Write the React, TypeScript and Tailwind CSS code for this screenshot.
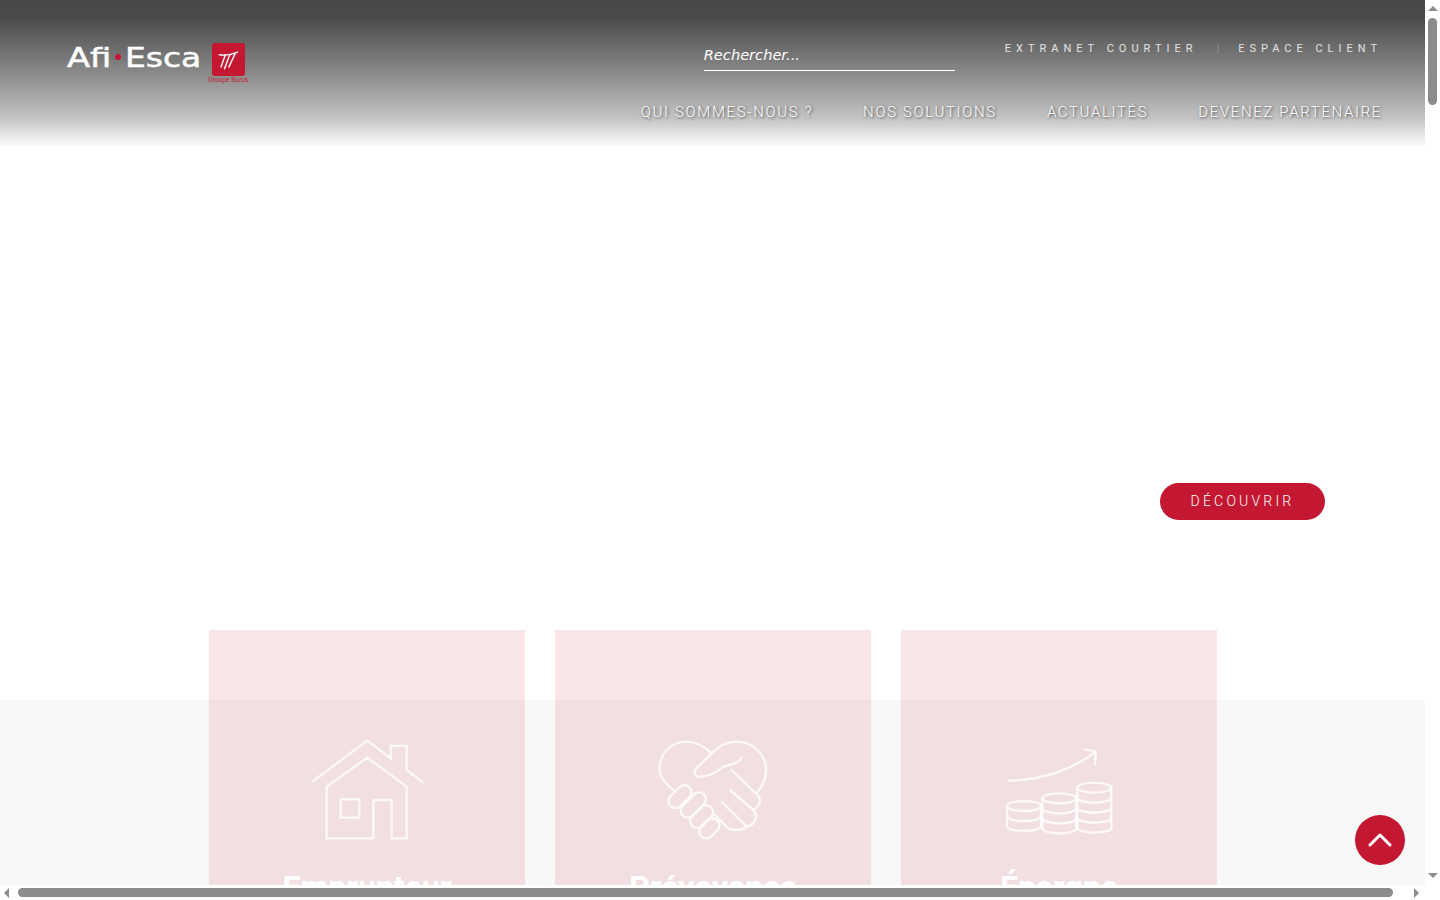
import React from "react";

const navLinks = ["Qui sommes-nous ?", "Nos solutions", "Actualités", "Devenez partenaire"];

function HouseIcon() {
  return (
    <svg viewBox="0 0 360 330" className="w-[120px] h-[110px]" fill="none" stroke="#fff" strokeOpacity="0.8" strokeWidth="7">
      <path d="M16 140 181 17 251 70V33H299V105L347 142" />
      <path d="M59 310V155L181 68 299 155V310H254V195H199V310Z" />
      <rect x="101" y="193" width="56" height="55" />
    </svg>
  );
}

function HandshakeIcon() {
  return (
    <svg viewBox="0 0 360 330" className="w-[120px] h-[110px]" fill="none" stroke="#fff" strokeOpacity="0.8" strokeWidth="7" strokeLinecap="round" strokeLinejoin="round">
      <path d="M61 165C30 140 17 120 19 100 22 50 60 20 100 20 130 20 155 35 176 55 200 30 225 20 251 20 300 20 339 60 339 105 339 130 328 155 311 175" />
      <path d="M176 55 130 100C122 110 124 124 136 125 155 127 185 115 210 97 230 85 255 92 266 67" />
      <path d="M236 105 316 183C325 195 320 215 301 225L231 165" />
      <path d="M301 225C318 245 305 270 281 275L206 200" />
      <path d="M281 275C262 290 240 285 226 280L186 240" />
      <rect x="41" y="164" width="80" height="42" rx="21" transform="rotate(-45 81 185)" />
      <rect x="76" y="189" width="90" height="42" rx="21" transform="rotate(-45 121 210)" />
      <rect x="106" y="224" width="80" height="42" rx="21" transform="rotate(-45 146 245)" />
      <rect x="135" y="259" width="68" height="42" rx="21" transform="rotate(-45 169 280)" />
    </svg>
  );
}

function CoinStack({ cx, top, bottom }: { cx: number; top: number; bottom: number }) {
  const rx = 51;
  const ry = 15;
  const layers: number[] = [];
  for (let y = top + 30; y <= bottom; y += 30) layers.push(y);
  return (
    <g>
      <ellipse cx={cx} cy={top} rx={rx} ry={ry} />
      <path d={`M${cx - rx} ${top}V${bottom}M${cx + rx} ${top}V${bottom}`} />
      {layers.map((y) => (
        <path key={y} d={`M${cx - rx} ${y}A${rx} ${ry} 0 0 0 ${cx + rx} ${y}`} />
      ))}
    </g>
  );
}

function CoinsIcon() {
  return (
    <svg viewBox="0 0 360 330" className="w-[120px] h-[110px]" fill="none" stroke="#fff" strokeOpacity="0.8" strokeWidth="7" strokeLinecap="round" strokeLinejoin="round">
      <path d="M28 137C120 135 210 110 288 52" />
      <path d="M258 43 290 50 288 88" />
      <CoinStack cx={75} top={213} bottom={273} />
      <CoinStack cx={181} top={190} bottom={280} />
      <CoinStack cx={286} top={158} bottom={278} />
    </svg>
  );
}

function Logo() {
  return (
    <div className="flex items-start">
      <div className="flex items-center h-[32px] mt-[-3px] text-white font-['DejaVu_Sans',sans-serif] text-[27px] leading-none [-webkit-text-stroke:0.5px_white]">
        <span className="w-[43px] scale-x-[1.25] origin-left">Afi</span>
        <span className="w-[6px] h-[6px] rounded-full bg-[#c41732] ml-[5px] mr-[4px]" />
        <span className="w-[76px] scale-x-[1.22] origin-left">Esca</span>
      </div>
      <div className="flex flex-col items-center w-[40px] ml-[7px] mt-[-1px]">
        <div className="w-[33px] h-[33px] rounded-[3px] bg-[#c41732] flex items-center justify-center">
          <svg viewBox="0 0 32 32" className="w-[28px] h-[28px]" fill="none" stroke="#fff" strokeWidth="1.6" strokeLinecap="round">
            <path d="M6 10C12 11 20 10 27 7" />
            <path d="M13 10 8 24" />
            <path d="M18 10 12 26" />
            <path d="M24 9 17 24" />
          </svg>
        </div>
        <span className="text-[6.5px] leading-[8px] text-[#c41732] font-['Liberation_Sans',sans-serif] whitespace-nowrap">Groupe Burus</span>
      </div>
    </div>
  );
}

function Header() {
  return (
    <header className="h-[148px] flex justify-between pl-[67px] pr-[43px] bg-[linear-gradient(180deg,#474747_0%,#4a4a4a_12%,#8b8b8b_50%,#c4c4c4_80%,#ffffff_100%)]">
      <div className="pt-[44px]">
        <Logo />
      </div>
      <div className="flex flex-col items-end">
        <div className="flex items-start h-[71px]">
          <input
            placeholder="Rechercher..."
            className="mt-[38px] w-[251px] h-[33px] pt-[1px] border-b border-white bg-transparent outline-none text-[14.6px] italic text-white placeholder:text-white font-['DejaVu_Sans',sans-serif]"
          />
          <div className="ml-[50px] mt-[42px] flex items-center text-[11px] leading-[14px] tracking-[5px] text-white/80 font-['Roboto',sans-serif] whitespace-nowrap">
            <a>EXTRANET COURTIER</a>
            <span className="mx-[19px] tracking-normal text-white/30">|</span>
            <a>ESPACE CLIENT</a>
          </div>
        </div>
        <nav className="mt-[32px] flex gap-[50px] text-[15px] leading-[18px] font-light tracking-[1.64px] uppercase text-white font-['Roboto',sans-serif] [text-shadow:1px_1px_3px_rgba(0,0,0,0.7)]">
          {navLinks.map((l) => (
            <a key={l} className="whitespace-nowrap">{l}</a>
          ))}
        </nav>
      </div>
    </header>
  );
}

function Card({ title, children }: { title: string; children: React.ReactNode }) {
  return (
    <div className="w-[316px] h-[300px] bg-[rgba(196,23,50,0.105)] flex flex-col items-center pt-[105px]">
      {children}
      <h2 className="mt-[24px] text-[32px] leading-[36px] font-bold text-white font-['Roboto',sans-serif]">{title}</h2>
    </div>
  );
}

function TriangleUp() {
  return <span className="w-0 h-0 border-x-[5px] border-x-transparent border-b-[5px] border-b-[#8c8c8c]" />;
}
function TriangleDown() {
  return <span className="w-0 h-0 border-x-[5px] border-x-transparent border-t-[5px] border-t-[#8c8c8c]" />;
}

export default function App() {
  return (
    <div className="relative w-[1440px] h-[900px] overflow-hidden bg-white flex flex-col">
      <div className="flex h-[885px]">
        <main className="w-[1425px] h-[885px] overflow-hidden bg-white">
          <Header />
          <section className="h-[552px] flex justify-end items-start pt-[335px] pr-[100px]">
            <a className="w-[165px] h-[37px] rounded-full bg-[#c41732] flex items-center justify-center text-[14px] font-light tracking-[3.2px] text-white font-['Roboto',sans-serif]">DÉCOUVRIR</a>
          </section>
          <section className="bg-[#f8f8f8] h-[300px]">
            <div className="relative -top-[70px] pl-[209px] flex gap-[30px]">
              <Card title="Emprunteur"><HouseIcon /></Card>
              <Card title="Prévoyance"><HandshakeIcon /></Card>
              <Card title="Épargne"><CoinsIcon /></Card>
            </div>
          </section>
        </main>
        <div className="w-[15px] flex flex-col items-center pt-[6px] pb-[7px]">
          <TriangleUp />
          <div className="mt-[7px] w-[9px] h-[87px] rounded-full bg-[#8c8c8c]" />
          <div className="flex-1" />
          <TriangleDown />
        </div>
      </div>
      <div className="h-[15px] flex items-center pl-[4px]">
        <span className="w-0 h-0 border-y-[5px] border-y-transparent border-r-[5px] border-r-[#8c8c8c]" />
        <div className="ml-[9px] w-[1375px] h-[9px] rounded-full bg-[#8c8c8c]" />
        <span className="ml-[21px] w-0 h-0 border-y-[5px] border-y-transparent border-l-[5px] border-l-[#8c8c8c]" />
      </div>
      <a className="absolute left-[1355px] top-[815px] w-[50px] h-[50px] rounded-full bg-[#c41732] flex items-center justify-center">
        <svg viewBox="0 0 24 14" className="w-[24px] h-[14px]" fill="none" stroke="#fff" strokeWidth="3" strokeLinecap="round" strokeLinejoin="round">
          <path d="M2 12 12 2 22 12" />
        </svg>
      </a>
    </div>
  );
}
